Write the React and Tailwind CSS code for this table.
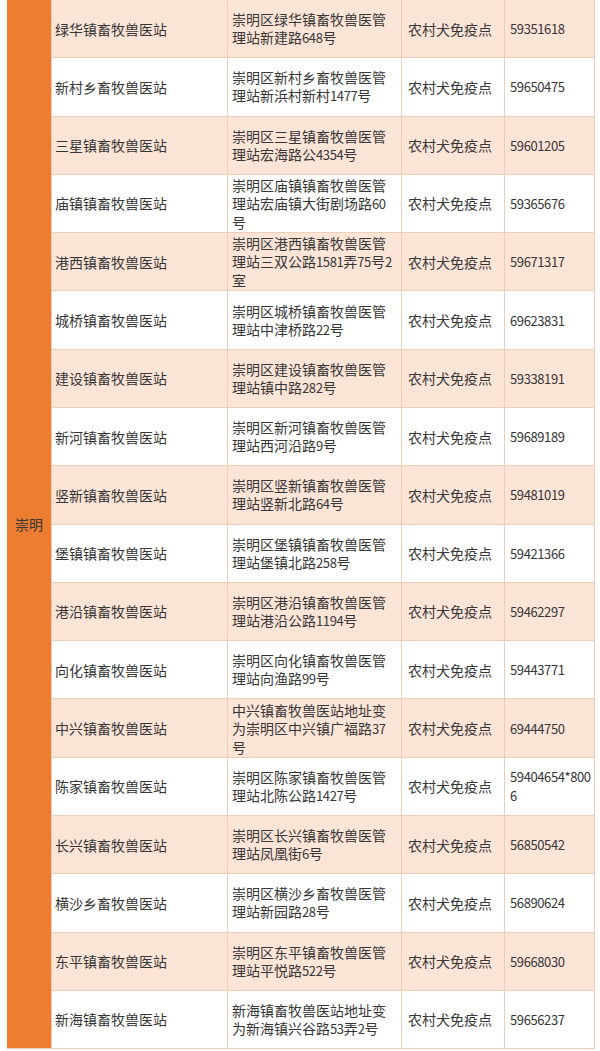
import React from 'react';

const ROWS = [
  { name: '绿华镇畜牧兽医站', addr: ['崇明区绿华镇畜牧兽医管', '理站新建路648号'], tel: ['59351618'] },
  { name: '新村乡畜牧兽医站', addr: ['崇明区新村乡畜牧兽医管', '理站新浜村新村1477号'], tel: ['59650475'] },
  { name: '三星镇畜牧兽医站', addr: ['崇明区三星镇畜牧兽医管', '理站宏海路公4354号'], tel: ['59601205'] },
  { name: '庙镇镇畜牧兽医站', addr: ['崇明区庙镇镇畜牧兽医管', '理站宏庙镇大街剧场路60', '号'], tel: ['59365676'] },
  { name: '港西镇畜牧兽医站', addr: ['崇明区港西镇畜牧兽医管', '理站三双公路1581弄75号2', '室'], tel: ['59671317'] },
  { name: '城桥镇畜牧兽医站', addr: ['崇明区城桥镇畜牧兽医管', '理站中津桥路22号'], tel: ['69623831'] },
  { name: '建设镇畜牧兽医站', addr: ['崇明区建设镇畜牧兽医管', '理站镇中路282号'], tel: ['59338191'] },
  { name: '新河镇畜牧兽医站', addr: ['崇明区新河镇畜牧兽医管', '理站西河沿路9号'], tel: ['59689189'] },
  { name: '竖新镇畜牧兽医站', addr: ['崇明区竖新镇畜牧兽医管', '理站竖新北路64号'], tel: ['59481019'] },
  { name: '堡镇镇畜牧兽医站', addr: ['崇明区堡镇镇畜牧兽医管', '理站堡镇北路258号'], tel: ['59421366'] },
  { name: '港沿镇畜牧兽医站', addr: ['崇明区港沿镇畜牧兽医管', '理站港沿公路1194号'], tel: ['59462297'] },
  { name: '向化镇畜牧兽医站', addr: ['崇明区向化镇畜牧兽医管', '理站向渔路99号'], tel: ['59443771'] },
  { name: '中兴镇畜牧兽医站', addr: ['中兴镇畜牧兽医站地址变', '为崇明区中兴镇广福路37', '号'], tel: ['69444750'] },
  { name: '陈家镇畜牧兽医站', addr: ['崇明区陈家镇畜牧兽医管', '理站北陈公路1427号'], tel: ['59404654*800', '6'] },
  { name: '长兴镇畜牧兽医站', addr: ['崇明区长兴镇畜牧兽医管', '理站凤凰街6号'], tel: ['56850542'] },
  { name: '横沙乡畜牧兽医站', addr: ['崇明区横沙乡畜牧兽医管', '理站新园路28号'], tel: ['56890624'] },
  { name: '东平镇畜牧兽医站', addr: ['崇明区东平镇畜牧兽医管', '理站平悦路522号'], tel: ['59668030'] },
  { name: '新海镇畜牧兽医站', addr: ['新海镇畜牧兽医站地址变', '为新海镇兴谷路53弄2号'], tel: ['59656237'] },
];

// digits in the source are set narrower than the CJK glyphs
function Txt({ text }) {
  return text.split(/([\d*]+)/).map((part, i) =>
    /^[\d*]+$/.test(part) ? (
      <span key={i} className="text-[13px] tracking-[-0.4px]">{part}</span>
    ) : (
      <span key={i}>{part}</span>
    )
  );
}

function Lines({ lines }) {
  return (
    <div className="flex flex-col">
      {lines.map((l, i) => (
        <span key={i} className="whitespace-nowrap">
          <Txt text={l} />
        </span>
      ))}
    </div>
  );
}

export default function App() {
  return (
    <div
      className="w-[600px] h-[1051px] bg-white pl-[7px] text-[14px] leading-[18px] text-[#363636]"
      style={{ fontFamily: '"Noto Sans CJK SC", "Noto Sans", sans-serif' }}
    >
      <div className="flex w-[588px] h-[1049px] border-b border-r border-[#efcdb6] overflow-hidden">
        {/* district column */}
        <div className="w-[45px] shrink-0 bg-[#ed7d31] border-r border-[#f3c9ad] flex items-center pl-[8px]">
          崇明
        </div>

        {/* rows */}
        <div className="flex-1 min-w-0 flex flex-col">
          {ROWS.map((r, i) => (
            <div
              key={r.name}
              className={`flex-1 flex border-[#efcdb6] ${i < ROWS.length - 1 ? 'border-b' : ''} ${
                i % 2 === 0 ? 'bg-[#fce4d6]' : 'bg-white'
              }`}
            >
              <div className="w-[176px] shrink-0 flex items-center pl-[3px] border-r border-[#efcdb6]">
                {r.name}
              </div>
              <div className="w-[174px] shrink-0 flex items-center pl-[4px] border-r border-[#efcdb6]">
                <Lines lines={r.addr} />
              </div>
              <div className="w-[103px] shrink-0 flex items-center pl-[6px] border-r border-[#efcdb6]">
                农村犬免疫点
              </div>
              <div className="flex-1 min-w-0 flex items-center pl-[5px]">
                <Lines lines={r.tel} />
              </div>
            </div>
          ))}
        </div>
      </div>
    </div>
  );
}
